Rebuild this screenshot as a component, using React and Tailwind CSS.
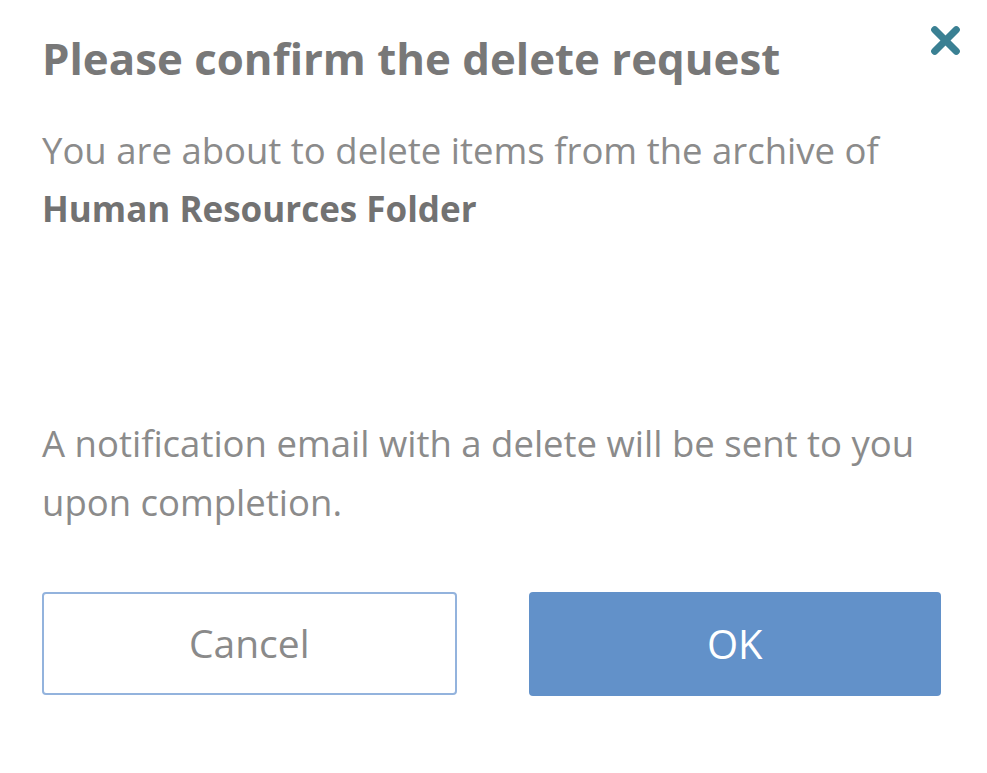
import { X } from "lucide-react";

const App = () => {
    return (
        <div className="min-h-screen w-[987px] bg-white font-['Open_Sans',sans-serif]">

            <div className="relative pl-[42px] pr-[46px] pt-[20px]">

                {/* Close */}
                <button className="absolute right-[20px] top-[19px] text-[#3a8093]">
                    <X size={43} strokeWidth={4} />
                </button>

                <h1 className="text-[43.8px] font-bold leading-[76px] text-[#787878]">
                    Please confirm the delete request
                </h1>

                <p className="mt-[25px] text-[36.5px] leading-[58px] text-[#8b8b8b]">
                    You are about to delete items from the archive of
                    <br />
                    <span className="text-[35px] font-bold text-[#727272]">Human Resources Folder</span>
                </p>

                <p className="mt-[176px] text-[36.5px] leading-[59px] text-[#8b8b8b]">
                    A notification email with a delete will be sent to you upon completion.
                </p>

                <div className="mt-[60px] flex gap-[72px]">
                    <button className="h-[103px] w-[415px] rounded-[4px] border-2 border-[#93b3dd] bg-white text-[39px] text-[#8a8a8a]">
                        Cancel
                    </button>
                    <button className="h-[104px] w-[413px] rounded-[4px] bg-[#6291c9] text-[40px] text-white">
                        OK
                    </button>
                </div>

            </div>

        </div>
    );
};

export default App;
